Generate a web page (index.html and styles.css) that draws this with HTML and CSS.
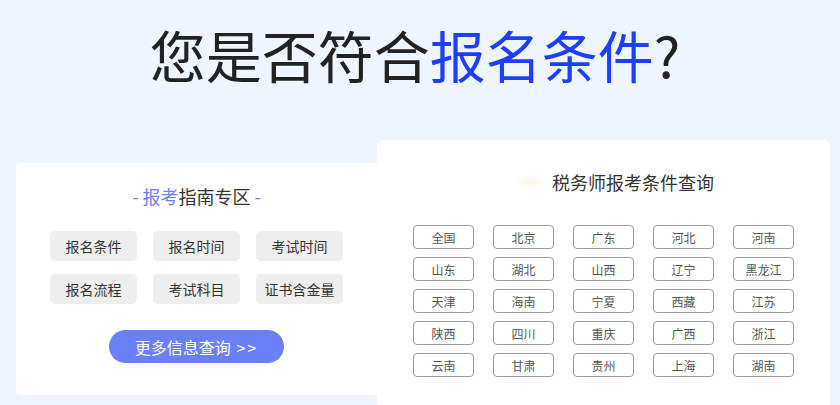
FILE: index.html
```html
<!DOCTYPE html>
<html lang="zh-CN">
<head>
<meta charset="utf-8">
<title>报名条件</title>
<link rel="stylesheet" href="styles.css">
</head>
<body>
<h1 class="headline">您是否符合<span class="hl">报名条件</span>?</h1>
<div class="cards">
  <section class="guide">
    <h2 class="guide-title"><span class="accent">- 报考</span>指南专区<span class="accent"> -</span></h2>
    <div class="guide-grid">
      <a class="guide-btn">报名条件</a>
      <a class="guide-btn">报名时间</a>
      <a class="guide-btn">考试时间</a>
      <a class="guide-btn">报名流程</a>
      <a class="guide-btn">考试科目</a>
      <a class="guide-btn">证书含金量</a>
    </div>
    <a class="more-btn">更多信息查询 <span class="arrows">&gt;&gt;</span></a>
  </section>
  <section class="query">
    <h2 class="query-title"><span class="query-icon"></span><span>税务师报考条件查询</span></h2>
    <div class="region-grid">
      <a class="region">全国</a><a class="region">北京</a><a class="region">广东</a><a class="region">河北</a><a class="region">河南</a>
      <a class="region">山东</a><a class="region">湖北</a><a class="region">山西</a><a class="region">辽宁</a><a class="region">黑龙江</a>
      <a class="region">天津</a><a class="region">海南</a><a class="region">宁夏</a><a class="region">西藏</a><a class="region">江苏</a>
      <a class="region">陕西</a><a class="region">四川</a><a class="region">重庆</a><a class="region">广西</a><a class="region">浙江</a>
      <a class="region">云南</a><a class="region">甘肃</a><a class="region">贵州</a><a class="region">上海</a><a class="region">湖南</a>
    </div>
  </section>
</div>
</body>
</html>
```
FILE: styles.css
```css
html, body {
  margin: 0;
  padding: 0;
}
body {
  background: #eef5ff;
  font-family: "Noto Sans CJK SC", "Noto Sans", sans-serif;
  color: #333;
  width: 840px;
  height: 405px;
  overflow: hidden;
}
.headline {
  margin: 0;
  padding-top: 22px;
  font-size: 56px;
  line-height: 64px;
  font-weight: 400;
  color: #222;
  text-align: center;
  padding-right: 10px;
}
.hl {
  color: #1d3ffb;
}
.cards {
  margin-top: 54px;
  display: flex;
  align-items: flex-start;
  padding-left: 16px;
}
.guide {
  margin-top: 23px;
  width: 361px;
  height: 232px;
  background: #fff;
  border-radius: 4px 0 0 4px;
  box-sizing: border-box;
  padding-top: 21px;
  display: flex;
  flex-direction: column;
  align-items: center;
}
.guide-title {
  margin: 0;
  font-size: 18px;
  line-height: 24px;
  font-weight: 400;
  color: #333;
}
.accent {
  color: #6d7ef2;
}
.guide-grid {
  margin-top: 23px;
  display: grid;
  grid-template-columns: repeat(3, 87px);
  grid-auto-rows: 30px;
  column-gap: 16px;
  row-gap: 13px;
}
.guide-btn {
  background: #eeeeee;
  border-radius: 5px;
  font-size: 14px;
  color: #333;
  display: flex;
  align-items: center;
  justify-content: center;
}
.more-btn {
  margin-top: 26px;
  width: 175px;
  height: 33px;
  border-radius: 17px;
  background: #6b7ff6;
  color: #fff;
  font-size: 16px;
  display: flex;
  align-items: center;
  justify-content: center;
  white-space: pre;
}
.arrows {
  letter-spacing: 2px;
  margin-left: 2px;
}
.query {
  width: 453px;
  height: 300px;
  background: #fff;
  border-radius: 6px;
  box-sizing: border-box;
  padding-top: 30px;
  display: flex;
  flex-direction: column;
  align-items: center;
}
.query-title {
  margin: 0;
  font-size: 18px;
  line-height: 24px;
  font-weight: 400;
  color: #333;
  display: flex;
  align-items: center;
}
.query-icon {
  width: 26px;
  height: 12px;
  margin-left: 24px;
  margin-right: 9px;
  border-radius: 50%;
  background: radial-gradient(ellipse at center, rgba(245, 235, 200, 0.45), rgba(255, 255, 255, 0));
}
.region-grid {
  margin-top: 31px;
  display: grid;
  grid-template-columns: repeat(5, 61px);
  grid-auto-rows: 24px;
  column-gap: 19px;
  row-gap: 8px;
}
.region {
  border: 1px solid #9a9a9a;
  border-radius: 4px;
  font-size: 12px;
  color: #555;
  display: flex;
  align-items: center;
  justify-content: center;
}
```
